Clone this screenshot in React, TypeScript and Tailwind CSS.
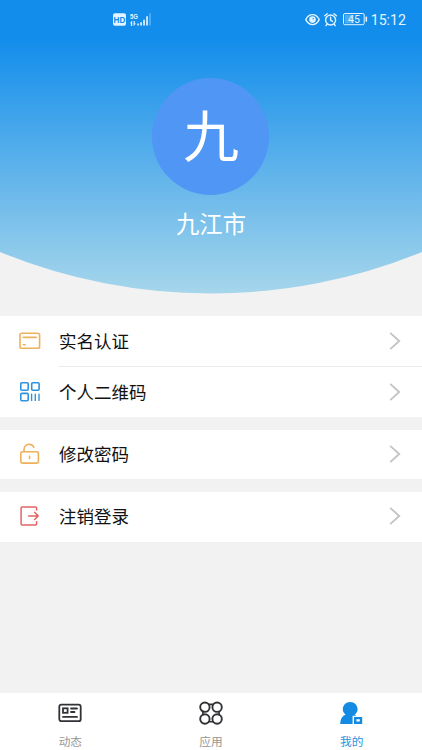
import type { ReactNode } from "react";

const CardIcon = () => (
  <svg width="22" height="22" viewBox="0 0 22 22" fill="none" stroke="#eeb15c" strokeWidth="1.6" strokeLinecap="round">
    <rect x="1" y="3.3" width="19.6" height="15" rx="1.8" />
    <path d="M4.3 7.4H17.2M4.3 14.8H6.2" />
  </svg>
);

const QrIcon = () => (
  <svg width="22" height="22" viewBox="0 0 22 22" fill="none" stroke="#2f93dd" strokeWidth="1.6" strokeLinecap="round">
    <rect x="1.8" y="1.8" width="7.4" height="7.4" rx="1" />
    <rect x="12.7" y="1.8" width="7.4" height="7.4" rx="1" />
    <rect x="1.8" y="12.4" width="7.4" height="7.4" rx="1" />
    <path d="M12.6 13.2V19.4M16.3 13.2V19.4M20 13.2V19.4" strokeWidth="1.4" />
  </svg>
);

const LockIcon = () => (
  <svg width="22" height="22" viewBox="0 0 22 22" fill="none" stroke="#eeb058" strokeWidth="1.6" strokeLinecap="round">
    <rect x="1.8" y="8.7" width="17.6" height="11.4" rx="1.6" />
    <path d="M5 8.5V6.6C5 3.6 7.2 1.2 9.9 1.2C12.3 1.2 14 2.4 14.8 4.2M10.5 13.2V15.6" />
  </svg>
);

const LogoutIcon = () => (
  <svg width="22" height="22" viewBox="0 0 22 22" fill="none" stroke="#e46464" strokeWidth="1.5" strokeLinecap="round" strokeLinejoin="round">
    <path d="M17.6 5V3Q17.6 1.9 16.5 1.9H3.2Q2.1 1.9 2.1 3V18.8Q2.1 19.9 3.2 19.9H16.5Q17.6 19.9 17.6 18.8V16.8" />
    <path d="M9.6 10.9H19.2M15.6 7.3L19.2 10.9L15.6 14.5" />
  </svg>
);

const GROUPS = [
  {
    className: "h-[101px]",
    rows: [
      { label: "实名认证", icon: <CardIcon /> },
      { label: "个人二维码", icon: <QrIcon /> },
    ],
  },
  { className: "mt-[12.5px] h-[49.5px]", rows: [{ label: "修改密码", icon: <LockIcon /> }] },
  { className: "mt-[12.5px] h-[50px]", rows: [{ label: "注销登录", icon: <LogoutIcon /> }] },
];

function StatusBar() {
  return (
    <div className="flex h-10 items-center pr-4 pl-[113px] text-[#e2f4ff]">
      <svg width="39" height="16" viewBox="0 0 39 16" fill="currentColor">
        <rect x="0" y="1.3" width="13" height="12.4" rx="2" />
        <text x="6.5" y="10.6" fontSize="8.2" fontWeight="700" textAnchor="middle" fill="#128deb" fontFamily="Liberation Sans, sans-serif">
          HD
        </text>
        <text x="17" y="6.6" fontSize="8" fontWeight="700" textLength="8" lengthAdjust="spacingAndGlyphs" fontFamily="Liberation Sans, sans-serif">
          5G
        </text>
        <path d="M17 11.2L19.2 8.6V14H17.9V11.2ZM20.6 9H21.8V11.6H23L20.6 14ZM24.3 11.6H25.9V13.6H24.3ZM27.2 10.3H28.9V13.6H27.2ZM30.2 7.7H31.9V13.6H30.2ZM33.2 4.2H34.9V13.6H33.2Z" />
        <path d="M36.2 1.3H37.8V13.6H36.2Z" opacity=".35" />
      </svg>
      <div className="ml-auto flex items-center">
        <svg width="15" height="14" viewBox="0 0 15 14" fill="none" stroke="currentColor" strokeWidth="1.4">
          <path d="M.8 6.6Q3.2 1.6 7.5 1.6T14.2 6.6Q11.8 11.6 7.5 11.6T.8 6.6Z" />
          <circle cx="7.5" cy="6.6" r="2.6" fill="currentColor" />
          <circle cx="8.2" cy="5.8" r=".7" fill="#128deb" stroke="none" />
        </svg>
        <svg className="ml-1" width="14" height="14" viewBox="0 0 14 14" fill="none" stroke="currentColor" strokeWidth="1.4" strokeLinecap="round">
          <circle cx="6.6" cy="7" r="5" />
          <path d="M6.6 4.3V7.2L8.4 8.4M.8 2.8L3.2 .8M12.4 2.8L10 .8M3 11.3L2 12.6M10.2 11.3L11.2 12.6" />
        </svg>
        <svg className="ml-[5px]" width="25" height="13" viewBox="0 0 25 13" fill="none" stroke="currentColor">
          <rect x=".5" y=".5" width="20.7" height="11.2" rx="1.4" />
          <rect x="1.8" y="1.8" width="9" height="8.6" fill="currentColor" fillOpacity=".3" stroke="none" />
          <path d="M23.3 3.6V8.6" strokeWidth="1.6" />
          <text x="11" y="9.8" fontSize="10.5" textAnchor="middle" fill="currentColor" stroke="none" fontFamily="Roboto, sans-serif">
            45
          </text>
        </svg>
        <span className="ml-[3px] font-[Roboto,sans-serif] text-[14.2px] leading-none">15:12</span>
      </div>
    </div>
  );
}

function Header() {
  return (
    <header className="relative isolate h-[294px]">
      <svg className="absolute inset-0 -z-10" width="422" height="294" viewBox="0 0 422 294">
        <defs>
          <linearGradient id="sky" gradientUnits="userSpaceOnUse" x1="0" y1="38" x2="0" y2="294">
            <stop offset="0" stopColor="#128deb" />
            <stop offset="1" stopColor="#a6d6eb" />
          </linearGradient>
        </defs>
        <path d="M0 0H422V252A557 557 0 0 1 0 252Z" fill="url(#sky)" />
      </svg>
      <StatusBar />
      <div className="flex flex-col items-center pt-[38px]">
        <div className="mr-px flex size-[117px] items-center justify-center rounded-full bg-[#4f96f5] text-[56px] leading-none text-white">
          <span className="-mt-[7px] ml-px">九</span>
        </div>
        <p className="mt-[14px] text-[23.3px] leading-7 text-white">九江市</p>
      </div>
    </header>
  );
}

function Row({ label, icon, divided }: { label: string; icon: ReactNode; divided: boolean }) {
  return (
    <div className={`flex items-center pl-[19px] ${divided ? "h-[51px]" : "h-[49px]"}`}>
      <span className="w-10 shrink-0">{icon}</span>
      <div className={`flex flex-1 items-center self-stretch pr-[21px] ${divided ? "border-t border-[#ececec]" : ""}`}>
        <span className="flex-1 text-[17.5px] leading-6 text-[#111]">{label}</span>
        <svg width="12" height="18" viewBox="0 0 12 18" fill="none" stroke="#c4c4c8" strokeWidth="1.9">
          <path d="M1.2 .9L10.2 9L1.2 17.1" />
        </svg>
      </div>
    </div>
  );
}

const TABS = [
  {
    label: "动态",
    active: false,
    icon: (
      <svg width="24" height="24" viewBox="0 0 24 24" fill="none" stroke="#303236" strokeWidth="1.8" strokeLinecap="round">
        <rect x="1.3" y="3.6" width="21.4" height="16.6" rx="2" />
        <rect x="5" y="7.3" width="4.6" height="4.5" />
        <path d="M13 7.5H19M13 11H16.5M5 15.9H19" />
      </svg>
    ),
  },
  {
    label: "应用",
    active: false,
    icon: (
      <svg width="24" height="24" viewBox="0 0 24 24" fill="none" stroke="#303236" strokeWidth="1.9">
        <circle cx="5.9" cy="6.2" r="4.7" />
        <circle cx="18.1" cy="6.2" r="4.7" />
        <circle cx="5.9" cy="18" r="4.7" />
        <circle cx="18.1" cy="18" r="4.7" />
        <path d="M9 3.4H15M9 20.8H15M3.9 10V14.2M20.1 10V14.2" strokeWidth="1.6" />
      </svg>
    ),
  },
  {
    label: "我的",
    active: true,
    icon: (
      <svg className="mr-px" width="24" height="24" viewBox="0 0 24 24" fill="#148be3">
        <path d="M11.2 1C15.4 1 18.6 4.2 18.6 8.2C18.6 10.5 17.5 12.4 15.8 13.6L17.4 14.8H13.6V23H1.2C1.2 18.2 3 15.2 6.6 13.6C4.9 12.4 3.8 10.5 3.8 8.2C3.8 4.2 7 1 11.2 1Z" />
        <path fillRule="evenodd" d="M15 16H23.2V23H15ZM17.4 18.3V20.5H20.8V18.3Z" />
      </svg>
    ),
  },
];

export default function App() {
  return (
    <div className="flex h-[750px] w-[422px] flex-col overflow-hidden bg-[#f2f2f2] font-['Noto_Sans_CJK_SC',sans-serif]">
      <Header />
      <main className="flex-1 pt-[22px]">
        {GROUPS.map((group) => (
          <section key={group.rows[0].label} className={`flex flex-col justify-between bg-white ${group.className}`}>
            {group.rows.map((row, i) => (
              <Row key={row.label} label={row.label} icon={row.icon} divided={i > 0} />
            ))}
          </section>
        ))}
      </main>
      <nav className="grid h-[57px] grid-cols-3 bg-white">
        {TABS.map((tab) => (
          <div key={tab.label} className="flex flex-col items-center pt-2">
            {tab.icon}
            <span className={`mt-2 text-[11.7px] leading-4 ${tab.active ? "text-[#2f93dd]" : "text-[#969696]"}`}>
              {tab.label}
            </span>
          </div>
        ))}
      </nav>
    </div>
  );
}
